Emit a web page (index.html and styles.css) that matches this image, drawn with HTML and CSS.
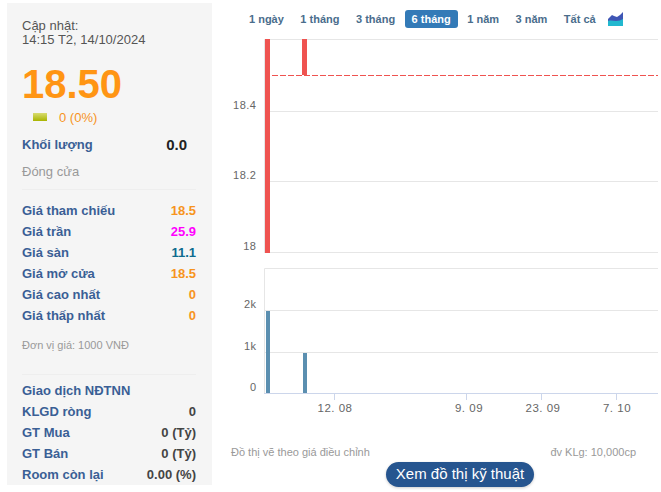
FILE: index.html
```html
<!DOCTYPE html>
<html lang="vi">
<head>
<meta charset="utf-8">
<title>Đồ thị</title>
<link rel="stylesheet" href="styles.css">
</head>
<body>
<div class="page">
  <aside class="side">
    <div class="updated">Cập nhật:<br>14:15 T2, 14/10/2024</div>
    <div class="price">18.50</div>
    <div class="change"><span class="flat"></span><span>0 (0%)</span></div>
    <div class="vol"><span>Khối lượng</span><b>0.0</b></div>
    <div class="status">Đóng cửa</div>
    <ul class="rows first">
      <li><span>Giá tham chiếu</span><b class="orange">18.5</b></li>
      <li><span>Giá trần</span><b class="magenta">25.9</b></li>
      <li><span>Giá sàn</span><b class="teal">11.1</b></li>
      <li><span>Giá mở cửa</span><b class="orange">18.5</b></li>
      <li><span>Giá cao nhất</span><b class="orange">0</b></li>
      <li><span>Giá thấp nhất</span><b class="orange">0</b></li>
    </ul>
    <div class="unit">Đơn vị giá: 1000 VNĐ</div>
    <ul class="rows second">
      <li><span>Giao dịch NĐTNN</span></li>
      <li><span>KLGD ròng</span><b>0</b></li>
      <li><span>GT Mua</span><b>0 (Tỷ)</b></li>
      <li><span>GT Bán</span><b>0 (Tỷ)</b></li>
      <li><span>Room còn lại</span><b>0.00 (%)</b></li>
    </ul>
  </aside>
  <main class="main">
    <nav class="tabs">
      <a>1 ngày</a><a>1 tháng</a><a>3 tháng</a><a class="on">6 tháng</a><a>1 năm</a><a>3 năm</a><a>Tất cả</a>
      <svg class="area" width="15" height="15" viewBox="0 0 15 15"><path d="M0 14V7L4 3 6 4 9 5 12 3 15 0V14Z" fill="#3f56b5"/><path d="M0 14V9C3 8 5 9 8 9S13 8 15 7V14Z" fill="#22b8cf"/></svg>
    </nav>
    <svg class="chart" width="436" height="407" viewBox="0 0 436 407">
      <g class="grid">
        <path d="M39.500 1.500H433M39.500 1.500V214M39 73.500H433M39 143.500H433M39 214.500H433"/>
        <path d="M39.500 230.500H433M39.500 230.500V355M39 272.500H433M39 314.500H433"/>
      </g>
      <path class="axis" d="M39 355.500H433M109.500 355V362M241.500 355V362M316.500 355V362M391.500 355V362"/>
      <path class="ref" d="M47 37.500H433"/>
      <rect class="up" x="40" y="1" width="5" height="214"/>
      <rect class="up" x="77" y="1" width="5" height="36"/>
      <rect class="vb" x="41" y="273" width="4" height="82"/>
      <rect class="vb" x="78" y="315" width="4" height="40"/>
      <g class="ylab">
        <text x="31.500" y="71">18.4</text>
        <text x="31.500" y="141">18.2</text>
        <text x="31.500" y="212">18</text>
        <text x="31.500" y="270">2k</text>
        <text x="31.500" y="312">1k</text>
        <text x="31.500" y="353">0</text>
      </g>
      <g class="xlab">
        <text x="110" y="374">12. 08</text>
        <text x="244" y="374">9. 09</text>
        <text x="318" y="374">23. 09</text>
        <text x="392" y="374">7. 10</text>
      </g>
    </svg>
    <div class="notes"><span>Đồ thị vẽ theo giá điều chỉnh</span><span>đv KLg: 10,000cp</span></div>
    <div class="cta"><a class="btn">Xem đồ thị kỹ thuật</a></div>
  </main>
</div>
</body>
</html>
```
FILE: styles.css
```css
* { box-sizing: border-box; }
html, body { margin: 0; padding: 0; }
body { width: 661px; height: 492px; overflow: hidden; background: #fff; font-family: "Liberation Sans", Arial, sans-serif; color: #333; }
.page { display: flex; align-items: flex-start; padding: 3px 0 0 7px; }
.side { width: 205px; height: 482px; flex: none; overflow: hidden; background: #f5f5f5; padding: 16px 16px 0 15px; }
.updated { font-size: 13px; line-height: 14px; color: #555; }
.price { font-size: 40px; line-height: 46px; font-weight: 700; color: #ff9514; margin-top: 14px; }
.change { display: flex; align-items: center; height: 18px; margin-top: 1px; font-size: 13px; color: #f7941d; padding-left: 11px; }
.flat { width: 14px; height: 8px; margin-right: 12px; background: linear-gradient(#d8dc70, #a9b400); }
.vol { display: flex; justify-content: space-between; align-items: center; height: 20px; margin-top: 8px; padding-right: 9px; font-size: 13px; font-weight: 700; color: #3a5f95; }
.vol b { color: #222; font-size: 15px; }
.status { font-size: 13px; line-height: 16px; color: #999; margin-top: 10px; padding-bottom: 9px; border-bottom: 1px solid #eee; }
.rows { list-style: none; margin: 0; padding: 0; }
.rows li { display: flex; justify-content: space-between; height: 21px; line-height: 21px; font-size: 13px; font-weight: 700; color: #3a5f95; }
.rows b { color: #444; }
.first { margin-top: 10px; }
.rows b.orange { color: #f7941d; }
.rows b.magenta { color: #f0f; }
.rows b.teal { color: #0e6b8f; }
.unit { font-size: 11px; line-height: 14px; color: #999; margin-top: 12px; padding-bottom: 22px; border-bottom: 1px solid #eee; }
.second { margin-top: 5px; }
.main { width: 436px; margin-left: 13px; flex: none; }
.tabs { display: flex; align-items: center; gap: 2.500px; height: 18px; margin-top: 7px; padding-left: 17px; }
.tabs a { font-size: 11px; line-height: 18px; font-weight: 700; color: #4a6d8c; padding: 0 7px; border-radius: 3px; }
.tabs a.on { background: #337ab7; color: #fff; }
.area { margin-left: 3px; }
.chart { display: block; margin-top: 10px; }
.grid path { fill: none; stroke: #e6e6e6; stroke-width: 1; }
.axis { fill: none; stroke: #ccd6eb; }
.ref { fill: none; stroke: #ef5350; stroke-dasharray: 6 2; }
.up { fill: #ef5350; }
.vb { fill: #5b8fb0; }
.ylab text { font-size: 11px; fill: #666; text-anchor: end; letter-spacing: .5px; font-family: "Liberation Sans", sans-serif; }
.xlab text { font-size: 11.500px; fill: #666; text-anchor: middle; letter-spacing: .5px; font-family: "Liberation Sans", sans-serif; }
.notes { display: flex; justify-content: space-between; font-size: 11px; line-height: 14px; color: #999; padding: 0 25px 0 6px; }
.cta { display: flex; justify-content: center; margin-top: 3px; padding-left: 34px; }
.btn { display: block; height: 25px; line-height: 24px; padding: 0 10px; border-radius: 13px; background: #26558f; color: #fff; font-size: 15px; box-shadow: 0 1px 3px rgba(0,0,0,.2); }
```
